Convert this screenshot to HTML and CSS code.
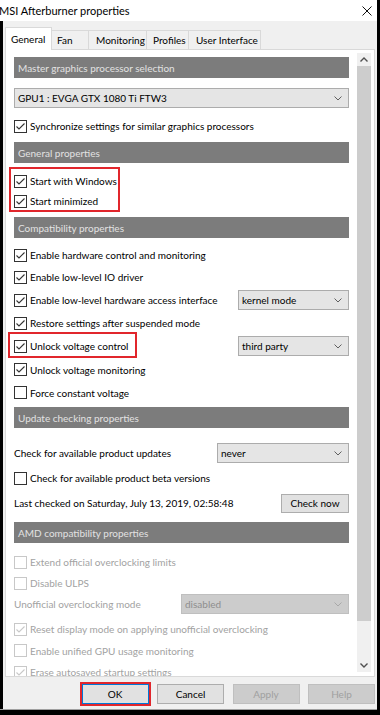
FILE: index.html
```html
<!DOCTYPE html>
<html>
<head>
<meta charset="utf-8">
<title>MSI Afterburner properties</title>
<link rel="stylesheet" href="styles.css">
</head>
<body>
<div class="window">
  <div class="titlebar">
    <span class="title">MSI Afterburner properties</span>
    <svg class="close" viewBox="0 0 10 10" width="10" height="10"><path d="M0.5 0.5 L9.5 9.5 M9.5 0.5 L0.5 9.5"/></svg>
  </div>
  <div class="client">
    <div class="tabs">
      <div class="tab active w-general">General</div>
      <div class="tab w-fan">Fan</div>
      <div class="tab w-mon">Monitoring</div>
      <div class="tab w-prof">Profiles</div>
      <div class="tab w-ui">User Interface</div>
    </div>
    <div class="page">
      <div class="scroll">
        <div class="hdr">Master graphics processor selection</div>
        <div class="select s-wide mt10"><span>GPU1 : EVGA GTX 1080 Ti FTW3</span><svg class="chev" viewBox="0 0 8 5" width="8" height="5"><path d="M0.5 0.5 L4 4 L7.5 0.5"/></svg></div>
        <div class="row mt7"><svg class="cb" viewBox="0 0 13 13" width="13" height="13"><rect x="0.5" y="0.5" width="12" height="12"/><path d="M2.5 6.5 L5 9 L10.5 3.5"/></svg><span>Synchronize settings for similar graphics processors</span></div>

        <div class="hdr mt5">General properties</div>
        <div class="marked mt8">
          <span class="mark mark-start"></span>
          <div class="row h20"><svg class="cb" viewBox="0 0 13 13" width="13" height="13"><rect x="0.5" y="0.5" width="12" height="12"/><path d="M2.5 6.5 L5 9 L10.5 3.5"/></svg><span>Start with Windows</span></div>
          <div class="row h20"><svg class="cb" viewBox="0 0 13 13" width="13" height="13"><rect x="0.5" y="0.5" width="12" height="12"/><path d="M2.5 6.5 L5 9 L10.5 3.5"/></svg><span>Start minimized</span></div>
        </div>

        <div class="hdr mt6">Compatibility properties</div>
        <div class="row mt6"><svg class="cb" viewBox="0 0 13 13" width="13" height="13"><rect x="0.5" y="0.5" width="12" height="12"/><path d="M2.5 6.5 L5 9 L10.5 3.5"/></svg><span>Enable hardware control and monitoring</span></div>
        <div class="row"><svg class="cb" viewBox="0 0 13 13" width="13" height="13"><rect x="0.5" y="0.5" width="12" height="12"/><path d="M2.5 6.5 L5 9 L10.5 3.5"/></svg><span>Enable low-level IO driver</span></div>
        <div class="row h24"><svg class="cb" viewBox="0 0 13 13" width="13" height="13"><rect x="0.5" y="0.5" width="12" height="12"/><path d="M2.5 6.5 L5 9 L10.5 3.5"/></svg><span>Enable low-level hardware access interface</span>
          <div class="select s-mode"><span>kernel mode</span><svg class="chev" viewBox="0 0 8 5" width="8" height="5"><path d="M0.5 0.5 L4 4 L7.5 0.5"/></svg></div></div>
        <div class="row"><svg class="cb" viewBox="0 0 13 13" width="13" height="13"><rect x="0.5" y="0.5" width="12" height="12"/><path d="M2.5 6.5 L5 9 L10.5 3.5"/></svg><span>Restore settings after suspended mode</span></div>
        <div class="row h24 marked">
          <span class="mark mark-unlock"></span>
          <svg class="cb" viewBox="0 0 13 13" width="13" height="13"><rect x="0.5" y="0.5" width="12" height="12"/><path d="M2.5 6.5 L5 9 L10.5 3.5"/></svg><span>Unlock voltage control</span>
          <div class="select s-mode"><span>third party</span><svg class="chev" viewBox="0 0 8 5" width="8" height="5"><path d="M0.5 0.5 L4 4 L7.5 0.5"/></svg></div></div>
        <div class="row h23"><svg class="cb" viewBox="0 0 13 13" width="13" height="13"><rect x="0.5" y="0.5" width="12" height="12"/><path d="M2.5 6.5 L5 9 L10.5 3.5"/></svg><span>Unlock voltage monitoring</span></div>
        <div class="row h23"><svg class="cb" viewBox="0 0 13 13" width="13" height="13"><rect x="0.5" y="0.5" width="12" height="12"/></svg><span>Force constant voltage</span></div>

        <div class="hdr mt3">Update checking properties</div>
        <div class="row mt14"><span>Check for available product updates</span>
          <div class="select s-never"><span>never</span><svg class="chev" viewBox="0 0 8 5" width="8" height="5"><path d="M0.5 0.5 L4 4 L7.5 0.5"/></svg></div></div>
        <div class="row mt3"><svg class="cb" viewBox="0 0 13 13" width="13" height="13"><rect x="0.5" y="0.5" width="12" height="12"/></svg><span>Check for available product beta versions</span></div>
        <div class="row mt3"><span>Last checked on Saturday, July 13, 2019, 02:58:48</span>
          <div class="btn btn-check">Check now</div></div>

        <div class="hdr mt8">AMD compatibility properties</div>
        <div class="row dis mt8"><svg class="cb" viewBox="0 0 13 13" width="13" height="13"><rect x="0.5" y="0.5" width="12" height="12"/></svg><span>Extend official overclocking limits</span></div>
        <div class="row dis h20"><svg class="cb" viewBox="0 0 13 13" width="13" height="13"><rect x="0.5" y="0.5" width="12" height="12"/></svg><span>Disable ULPS</span></div>
        <div class="row dis"><span>Unofficial overclocking mode</span>
          <div class="select s-dis"><span>disabled</span><svg class="chev" viewBox="0 0 8 5" width="8" height="5"><path d="M0.5 0.5 L4 4 L7.5 0.5"/></svg></div></div>
        <div class="row dis mt3"><svg class="cb" viewBox="0 0 13 13" width="13" height="13"><rect x="0.5" y="0.5" width="12" height="12"/><path d="M2.5 6.5 L5 9 L10.5 3.5"/></svg><span>Reset display mode on applying unofficial overclocking</span></div>
        <div class="row dis h21"><svg class="cb" viewBox="0 0 13 13" width="13" height="13"><rect x="0.5" y="0.5" width="12" height="12"/></svg><span>Enable unified GPU usage monitoring</span></div>
        <div class="row dis"><svg class="cb" viewBox="0 0 13 13" width="13" height="13"><rect x="0.5" y="0.5" width="12" height="12"/><path d="M2.5 6.5 L5 9 L10.5 3.5"/></svg><span>Erase autosaved startup settings</span></div>
      </div>
      <div class="scrollbar">
        <div class="sb-arrow"><svg viewBox="0 0 8 5" width="8" height="5"><path d="M0.5 4.5 L4 1 L7.5 4.5"/></svg></div>
        <div class="sb-thumb"></div>
        <div class="sb-track"></div>
        <div class="sb-arrow"><svg viewBox="0 0 8 5" width="8" height="5"><path d="M0.5 0.5 L4 4 L7.5 0.5"/></svg></div>
      </div>
    </div>
    <div class="buttons">
      <div class="btn btn-ok">OK</div>
      <div class="btn">Cancel</div>
      <div class="btn btn-dis">Apply</div>
      <div class="btn btn-dis">Help</div>
    </div>
  </div>
</div>
</body>
</html>
```
FILE: styles.css
```css
html, body {
  margin: 0;
  padding: 0;
  background: #000;
}
body {
  width: 380px;
  height: 715px;
  overflow: hidden;
  font-family: Lato, "Liberation Sans", sans-serif;
  font-size: 10px;
  color: #000;
}
.window {
  width: 377px;
  height: 709px;
  display: flex;
  flex-direction: column;
  border-bottom: 1px solid #a0a0a0;
  background: #f0f0f0;
}
.titlebar {
  height: 21px;
  background: #fff;
  display: flex;
  align-items: center;
  justify-content: space-between;
  padding-right: 5px;
  flex: none;
}
.title {
  font-size: 11px;
  margin-left: -1px;
  color: #000;
}
.close path {
  stroke: #111;
  stroke-width: 1;
  fill: none;
}
.client {
  flex: 1;
  display: flex;
  flex-direction: column;
  border-left: 3px solid #000;
  background: #f0f0f0;
  min-height: 0;
}
.tabs {
  display: flex;
  align-items: flex-end;
  height: 22px;
  margin-top: 6px;
  margin-left: 2px;
  position: relative;
  z-index: 2;
}
.tab {
  box-sizing: border-box;
  height: 19px;
  border: 1px solid #d9d9d9;
  border-bottom: none;
  background: #f0f0f0;
  margin-left: -1px;
  display: flex;
  align-items: center;
  padding-left: 5px;
  white-space: nowrap;
}
.tab.active {
  height: 23px;
  margin-bottom: -1px;
  background: #fff;
  margin-left: 0;
  padding-bottom: 1px;
}
.w-general { width: 47px; }
.w-fan { width: 38px; }
.w-mon { width: 59px; padding-left: 7px; }
.w-prof { width: 43px; padding-left: 6px; }
.w-ui { width: 73px; padding-left: 7px; }

.page {
  box-sizing: border-box;
  height: 628px;
  margin: 0 2px;
  border: 1px solid #d9d9d9;
  background: #fff;
  display: flex;
  flex: none;
}
.scroll {
  flex: 1;
  overflow: hidden;
  padding: 7px 8px 0 8px;
  display: flex;
  flex-direction: column;
}
.hdr {
  flex: none;
  height: 21px;
  background: #7c7c7c;
  color: #e2e2e2;
  display: flex;
  align-items: center;
  padding-left: 4px;
}
.row {
  flex: none;
  height: 22px;
  display: flex;
  align-items: center;
  white-space: nowrap;
}
.h20 { height: 20px; }
.h21 { height: 21px; }
.h23 { height: 23px; }
.h24 { height: 24px; }
.mt3 { margin-top: 3px; }
.mt5 { margin-top: 5px; }
.mt6 { margin-top: 6px; }
.mt7 { margin-top: 7px; }
.mt8 { margin-top: 8px; }
.mt10 { margin-top: 10px; }
.mt14 { margin-top: 14px; }

.cb {
  flex: none;
  margin-right: 3px;
}
.cb rect {
  fill: #fff;
  stroke: #333;
}
.cb path {
  fill: none;
  stroke: #333;
  stroke-width: 1.1;
}
.dis { color: #a2a2a2; }
.dis .cb rect, .dis .cb path { stroke: #c8c8c8; }

.select {
  box-sizing: border-box;
  flex: none;
  height: 20px;
  background: #e5e5e5;
  border: 1px solid #acacac;
  display: flex;
  align-items: center;
  justify-content: space-between;
  padding: 0 6px 0 3px;
  margin-left: auto;
}
.chev path {
  fill: none;
  stroke: #606060;
  stroke-width: 1;
}
.s-wide { width: 100%; }
.s-mode { width: 111px; }
.s-never { width: 132px; }
.s-dis {
  width: 168px;
  background: #cccccc;
  border-color: #bfbfbf;
  color: #8e8e8e;
}
.s-dis .chev path { stroke: #a8a8a8; }

.marked { position: relative; }
.mark {
  position: absolute;
  border: 2px solid #e1262c;
  pointer-events: none;
}
.mark-start {
  left: -5px;
  top: -4px;
  width: 107px;
  height: 41px;
}
.mark-unlock {
  left: -6px;
  top: -2px;
  width: 125px;
  height: 22px;
}

.btn {
  box-sizing: border-box;
  width: 67px;
  height: 20px;
  background: #e1e1e1;
  border: 1px solid #adadad;
  display: flex;
  align-items: center;
  justify-content: center;
  flex: none;
}
.btn-check {
  margin-left: auto;
  width: 68px;
  height: 19px;
}
.btn-ok {
  border-color: #0078d7;
  outline: 2px solid #e1262c;
}
.btn-dis {
  background: #cccccc;
  border-color: #bfbfbf;
  color: #a0a0a0;
}

.scrollbar {
  flex: none;
  width: 14px;
  height: 619px;
  margin: 3px 3px 0 0;
  background: #f0f0f0;
  display: flex;
  flex-direction: column;
}
.sb-arrow {
  height: 13px;
  display: flex;
  align-items: center;
  justify-content: center;
  flex: none;
}
.sb-arrow path {
  fill: none;
  stroke: #505050;
  stroke-width: 1.4;
}
.sb-thumb {
  height: 555px;
  background: #cdcdcd;
  flex: none;
}
.sb-track { flex: 1; }

.buttons {
  display: flex;
  justify-content: flex-end;
  gap: 8.5px;
  padding: 7px 2px 0 0;
}
```
